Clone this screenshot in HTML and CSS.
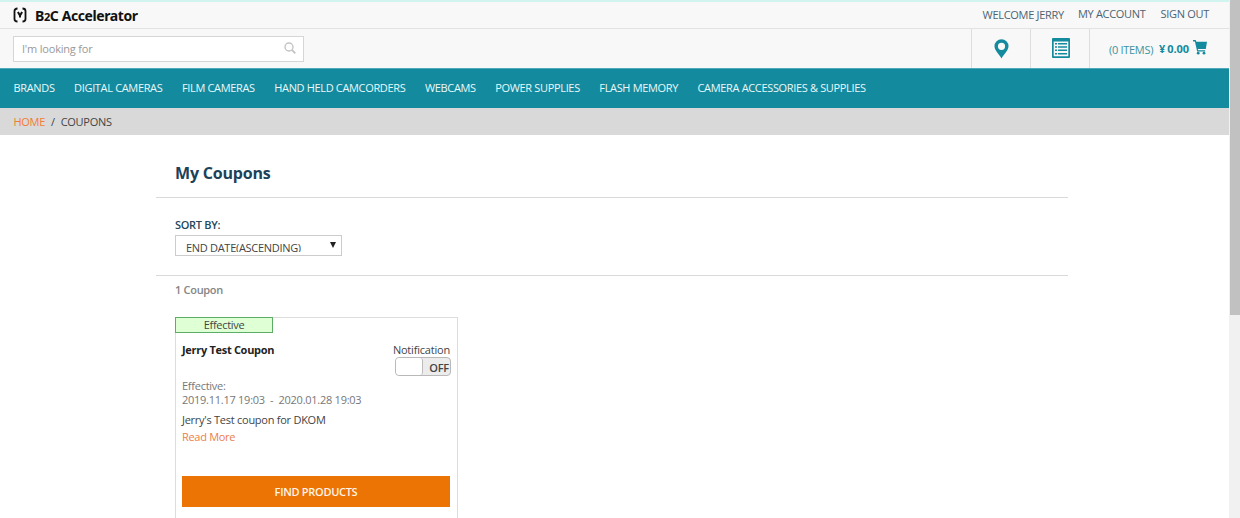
FILE: index.html
```html
<!DOCTYPE html>
<html lang="en">
	<head>
		<meta charset="UTF-8" />
		<meta name="viewport" content="width=device-width, initial-scale=1.0" />

		<link rel="stylesheet" href="styles.css">

		<title>My Coupons</title>
	</head>
	<body>
		<div class="page">
			<header>
				<div class="top-bar">
					<a class="logo">
						<svg width="14" height="16" viewBox="0 0 14 16" fill="none" stroke="#111" stroke-width="1.8">
							<path d="M4.500 1.500Q1.500 1.500 1.500 4V12Q1.500 14.500 4.500 14.500" />
							<path d="M9.500 1.500Q12.500 1.500 12.500 4V12Q12.500 14.500 9.500 14.500" />
							<path d="M4.900 5L7 8.600L9.100 5M7 8V10.500" stroke-width="2" />
						</svg>
						<span class="logo-text">B<small>2</small>C Accelerator</span>
					</a>
					<div class="account">
						<span class="welcome">WELCOME JERRY</span>
						<a class="my-account">MY ACCOUNT</a>
						<a class="sign-out">SIGN OUT</a>
					</div>
				</div>
				<div class="main-bar">
					<div class="search">
						<input type="text" placeholder="I'm looking for" />
						<svg width="12" height="12" viewBox="0 0 12 12" fill="none" stroke="#c4c4c4" stroke-width="1.4">
							<circle cx="5" cy="5" r="4" />
							<path d="M8 8L11.300 11.300" stroke-width="1.800" />
						</svg>
					</div>
					<div class="tools">
						<a class="tool">
							<svg width="15" height="20" viewBox="0 0 15 20" fill="#148a9e" fill-rule="evenodd">
								<path d="M7.500 .3A7 7 0 0 0 .5 7.300C.5 11.500 5 15 7.500 19.500C10 15 14.500 11.500 14.500 7.300A7 7 0 0 0 7.500 .3ZM7.500 3.700A3.600 3.600 0 1 1 7.500 10.900A3.600 3.600 0 1 1 7.500 3.700Z" />
							</svg>
						</a>
						<a class="tool">
							<svg width="18" height="20" viewBox="0 0 18 20" fill="#148a9e">
								<path fill-rule="evenodd" d="M1 0H17Q18 0 18 1V19Q18 20 17 20H1Q0 20 0 19V1Q0 0 1 0ZM1.700 3.500V18.300H16.300V3.500Z" />
								<path d="M3 5H5V6.500H3ZM6 5H15V6.500H6ZM3 8.300H5V9.800H3ZM6 8.300H15V9.800H6ZM3 11.600H5V13.100H3ZM6 11.600H15V13.100H6ZM3 14.900H5V16.400H3ZM6 14.900H15V16.400H6Z" />
							</svg>
						</a>
						<a class="cart">
							<span class="cart-items">(0 ITEMS)</span>
							<b class="cart-total"><span>¥</span>0.00</b>
							<svg width="14" height="15" viewBox="0 0 14 15" fill="#148a9e">
								<path d="M0 0H2.700L3.300 1.700H14L12.800 9H4.800L5.200 10.200H12.200V11.600H4.200L1.900 1.600H0Z" />
								<circle cx="5.200" cy="13.200" r="1.400" />
								<circle cx="11" cy="13.200" r="1.400" />
							</svg>
						</a>
					</div>
				</div>
				<nav>
					<a>BRANDS</a>
					<a>DIGITAL CAMERAS</a>
					<a>FILM CAMERAS</a>
					<a>HAND HELD CAMCORDERS</a>
					<a>WEBCAMS</a>
					<a>POWER SUPPLIES</a>
					<a>FLASH MEMORY</a>
					<a>CAMERA ACCESSORIES &amp; SUPPLIES</a>
				</nav>
				<div class="breadcrumb">
					<a>HOME</a>
					<span>/</span>
					<span>COUPONS</span>
				</div>
			</header>

			<main>
				<h1>My Coupons</h1>
				<div class="sort">
					<label>SORT BY:</label>
					<div class="select">
						<span class="select-text">END DATE(ASCENDING)</span>
						<span class="arrow"></span>
					</div>
				</div>
				<p class="count">1 Coupon</p>

				<div class="coupon">
					<div class="status">Effective</div>
					<div class="coupon-head">
						<b class="coupon-name">Jerry Test Coupon</b>
						<div class="notification">
							<span>Notification</span>
							<div class="toggle"><i></i><span>OFF</span></div>
						</div>
					</div>
					<div class="dates">
						<div>Effective:</div>
						<div class="range">2019.11.17 19:03 &nbsp;-&nbsp; 2020.01.28 19:03</div>
					</div>
					<div class="description">Jerry's Test coupon for DKOM</div>
					<a class="read-more">Read More</a>
					<button>FIND PRODUCTS</button>
				</div>
			</main>
		</div>
		<div class="scrollbar"><div class="thumb"></div></div>
	</body>
</html>
```
FILE: styles.css
```css
* {
	box-sizing: border-box;
}

body {
	margin: 0;
	height: 518px;
	display: flex;
	overflow: hidden;
	background-color: white;
	color: #444;
	font-family: "Open Sans", sans-serif;
	font-size: 11px;
	line-height: 14px;
	letter-spacing: -0.3px;
}

svg {
	display: block;
	flex: none;
}

.page {
	width: 1229px;
	height: 518px;
	overflow: hidden;
}

.top-bar {
	display: flex;
	justify-content: space-between;
	height: 29px;
	padding: 5px 20px 0 13px;
	background-color: #f8f8f8;
	border-top: 2px solid #d2f4f0;
	border-bottom: 1px solid #e2e2e2;
}

.logo {
	display: flex;
	gap: 8px;
	color: #111;
}

.logo-text {
	font-family: "Noto Sans", sans-serif;
	font-size: 14px;
	font-weight: bold;
	line-height: 18px;
	letter-spacing: -0.4px;
	white-space: nowrap;

	small {
		font-size: 11px;
	}
}

.account {
	display: flex;
	gap: 14px;
	color: #4d6372;
	white-space: nowrap;

	.welcome {
		padding-top: 1px;
	}

	.sign-out {
		margin-left: 1px;
	}
}

.main-bar {
	display: flex;
	justify-content: space-between;
	height: 39px;
	background-color: #f8f8f8;
}

.search {
	display: flex;
	align-items: center;
	width: 291px;
	height: 26px;
	margin: 7px 0 0 13px;
	padding: 0 7px 0 8px;
	background-color: white;
	border: 1px solid #d6d6d6;

	input {
		flex: 1;
		padding: 0;
		border: none;
		outline: none;
		background: none;
		font: inherit;
		letter-spacing: -0.2px;
	}

	input::placeholder {
		color: #999;
	}

	svg {
		margin-bottom: 2px;
	}
}

.tools {
	display: flex;
	color: #3d93a2;
}

.tool {
	display: flex;
	align-items: center;
	justify-content: center;
	width: 59px;
	padding-left: 1px;
	border-left: 1px solid #dedede;
}

.tool + .tool {
	padding: 0 0 2px 1px;
}

.cart {
	display: flex;
	align-items: center;
	width: 140px;
	padding-left: 19px;
	border-left: 1px solid #dedede;
	white-space: nowrap;

	.cart-items {
		padding-top: 3px;
	}

	.cart-total {
		margin: 1px 4px 0 6px;
		color: #148a9e;
		letter-spacing: -0.1px;

		span {
			margin-right: 2px;
		}
	}

	svg {
		margin-bottom: 2px;
	}
}

nav {
	display: flex;
	gap: 19.5px;
	height: 40px;
	padding-left: 13.5px;
	background-color: #148a9e;
	border-top: 1px solid #4ba9b8;
	color: #e9f8fa;
	line-height: 38px;
	letter-spacing: -0.34px;
	white-space: nowrap;
}

.breadcrumb {
	display: flex;
	gap: 6px;
	height: 27px;
	padding-left: 13.5px;
	background-color: #d9d9d9;
	line-height: 28px;

	a {
		color: #f47b33;
	}
}

main {
	width: 912px;
	margin-left: 156px;
}

h1 {
	height: 63px;
	margin: 0;
	padding: 27px 0 0 19px;
	border-bottom: 1px solid #d9d9d9;
	color: #1c4259;
	font-size: 16px;
	line-height: 22px;
	letter-spacing: -0.2px;
}

.sort {
	height: 78px;
	padding: 20px 0 0 19px;
	border-bottom: 1px solid #d9d9d9;

	label {
		display: block;
		height: 17px;
		color: #24485d;
		font-weight: 600;
	}
}

.select {
	display: flex;
	justify-content: space-between;
	width: 167px;
	height: 21px;
	padding: 5px 5px 0 10px;
	border: 1px solid #ccc;

	.select-text {
		height: 11px;
		overflow: hidden;
	}

	.arrow {
		width: 6px;
		height: 6px;
		margin-top: 1px;
		background-color: #222;
		clip-path: polygon(0 0, 100% 0, 50% 100%);
	}
}

.count {
	margin: 0;
	padding: 7px 0 0 19px;
	color: #858585;
	font-weight: 600;
}

.coupon {
	width: 283px;
	height: 230px;
	margin: 20px 0 0 19px;
	padding: 0 6px;
	border: 1px solid #ddd;

	button {
		display: block;
		width: 268px;
		height: 31px;
		margin-top: 32px;
		padding: 0;
		background-color: #ec7404;
		border: none;
		color: #fff4e8;
		font: inherit;
		font-weight: 600;
		letter-spacing: inherit;
	}
}

.status {
	width: 98px;
	height: 16px;
	margin: -1px 0 0 -7px;
	background-color: #dfffd4;
	border: 1px solid #5cae66;
	line-height: 13px;
	text-align: center;
}

.coupon-head {
	display: flex;
	justify-content: space-between;
	width: 268px;
	height: 46px;
	padding-top: 10px;

	.coupon-name {
		color: #222;
	}
}

.notification {
	text-align: right;
	letter-spacing: -0.2px;
}

.toggle {
	display: flex;
	justify-content: space-between;
	width: 56px;
	height: 19px;
	margin-right: -1px;
	margin-left: auto;
	padding-right: 1px;
	overflow: hidden;
	background-color: #ececec;
	border: 1px solid #b9b9b9;
	border-radius: 4px;
	font-weight: 600;
	line-height: 20px;

	i {
		width: 27px;
		background-color: white;
		border-right: 1px solid #bbb;
		border-radius: 3px;
	}
}

.dates {
	height: 34px;
	color: #777;
	letter-spacing: -0.26px;
}

.description {
	height: 17px;
	letter-spacing: -0.26px;
}

.read-more {
	display: block;
	color: #ec8049;
}

.scrollbar {
	width: 11px;
	background-color: #f1f1f1;
}

.thumb {
	width: 10px;
	height: 315px;
	margin-left: 1px;
	background-color: #c1c1c1;
}
```
